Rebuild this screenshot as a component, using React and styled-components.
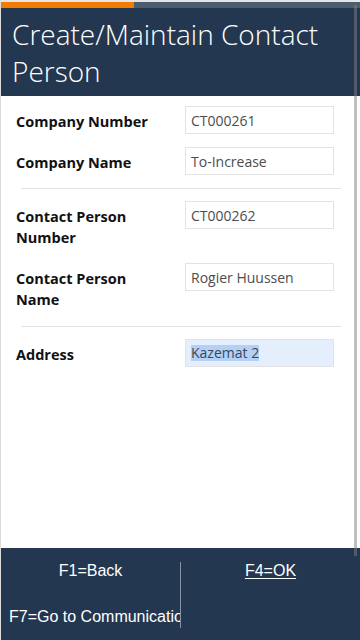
import React from "react";
import styled, { createGlobalStyle } from "styled-components";

const GlobalStyle = createGlobalStyle`
  html, body {
    margin: 0;
    padding: 0;
    background: #ffffff;
  }
  * {
    box-sizing: border-box;
  }
`;

const Frame = styled.div`
  position: relative;
  width: 360px;
  height: 640px;
  display: flex;
  flex-direction: column;
  border-left: 1px solid #dcdcdc;
  border-top: 2px solid #e6e6e6;
  overflow: hidden;
  font-family: "Open Sans", "Liberation Sans", sans-serif;
`;

const Progress = styled.div`
  display: flex;
  height: 6px;
  background: #4d5c6e;
`;

const ProgressFill = styled.div`
  height: 100%;
  background: #f27c00;
`;

const Header = styled.header`
  background: #243750;
  padding: 8px 12px 6px 11px;
`;

const Title = styled.h1`
  margin: 0;
  color: #ffffff;
  font-family: "Open Sans", sans-serif;
  font-weight: 300;
  font-size: 28px;
  line-height: 37px;
`;

const Body = styled.main`
  flex: 1;
  background: #ffffff;
`;

const Section = styled.section`
  display: flex;
  flex-direction: column;
  gap: 10px;
  padding: ${(p) => (p.$first ? "10px 0 10px" : "12px 0 11px")};
`;

const Divider = styled.hr`
  margin: 0 0 0 20px;
  width: 320px;
  border: 0;
  border-top: 1px solid #e3e3e3;
`;

const Row = styled.div`
  display: flex;
  align-items: flex-start;
`;

const Label = styled.label`
  width: 184px;
  padding: 5px 20px 5px 15px;
  font-weight: 700;
  font-size: 14.5px;
  line-height: 21px;
  color: #111111;
`;

const Field = styled.div`
  width: 149px;
  height: 28px;
  padding: 0 5px;
  display: flex;
  align-items: center;
  border: 1px solid #e3e3e3;
  background: ${(p) => (p.$focused ? "#e5eefc" : "#ffffff")};
  color: #4d4d4d;
  font-size: 14px;
  white-space: nowrap;
  overflow: hidden;
`;

const Selected = styled.span`
  background: #b3d1f7;
  color: #3d4654;
  line-height: 16px;
`;

const Footer = styled.footer`
  display: flex;
  background: #243750;
  padding: 14px 0 12px;
  font-family: "Liberation Sans", Arial, sans-serif;
  font-size: 16px;
  color: #ffffff;
`;

const Column = styled.div`
  width: ${(p) => p.$width}px;
  display: flex;
  flex-direction: column;
  gap: 28px;
  overflow: hidden;
  border-left: ${(p) => (p.$divided ? "1px solid #8792a2" : "none")};
  min-height: 66px;
`;

const KeyButton = styled.div`
  padding: 0 8px;
  line-height: 18px;
  text-align: center;
  white-space: nowrap;
  text-decoration: ${(p) => (p.$primary ? "underline" : "none")};
  text-underline-offset: 2px;
`;

const ScrollThumb = styled.div`
  position: absolute;
  top: 3px;
  right: 3px;
  width: 3px;
  height: 551px;
  background: rgba(128, 128, 128, 0.5);
`;

const rows1 = [
  { label: "Company Number", value: "CT000261" },
  { label: "Company Name", value: "To-Increase" },
];

const rows2 = [
  { label: "Contact Person Number", value: "CT000262" },
  { label: "Contact Person Name", value: "Rogier Huussen" },
];

export default function App() {
  return (
    <>
      <GlobalStyle />
      <Frame>
        <Progress>
          <ProgressFill style={{ width: `${(133 / 359) * 100}%` }} />
        </Progress>
        <Header>
          <Title>Create/Maintain Contact Person</Title>
        </Header>
        <Body>
          <Section $first>
            {rows1.map((r) => (
              <Row key={r.label}>
                <Label>{r.label}</Label>
                <Field>{r.value}</Field>
              </Row>
            ))}
          </Section>
          <Divider />
          <Section>
            {rows2.map((r) => (
              <Row key={r.label}>
                <Label>{r.label}</Label>
                <Field>{r.value}</Field>
              </Row>
            ))}
          </Section>
          <Divider />
          <Section>
            <Row>
              <Label>Address</Label>
              <Field $focused>
                <Selected>Kazemat 2</Selected>
              </Field>
            </Row>
          </Section>
        </Body>
        <Footer>
          <Column $width={179}>
            <KeyButton>F1=Back</KeyButton>
            <KeyButton>F7=Go to Communication</KeyButton>
          </Column>
          <Column $width={180} $divided>
            <KeyButton $primary>F4=OK</KeyButton>
          </Column>
        </Footer>
        <ScrollThumb />
      </Frame>
    </>
  );
}
